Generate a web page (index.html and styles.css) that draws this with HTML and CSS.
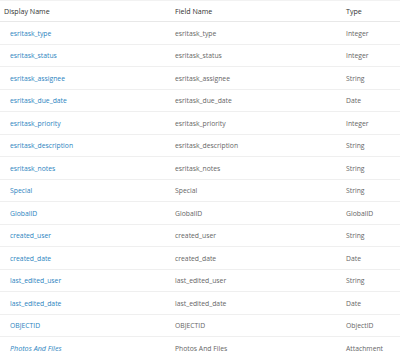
FILE: index.html
```html
<!DOCTYPE html>
<html>
<head>
<meta charset="utf-8">
<link rel="stylesheet" href="styles.css">
</head>
<body>
<div class="table">
  <div class="row head">
    <div class="c1">Display Name</div><div class="c2">Field Name</div><div class="c3">Type</div>
  </div>
  <div class="row"><div class="c1 link">esritask_type</div><div class="c2">esritask_type</div><div class="c3">Integer</div></div>
  <div class="row"><div class="c1 link">esritask_status</div><div class="c2">esritask_status</div><div class="c3">Integer</div></div>
  <div class="row"><div class="c1 link">esritask_assignee</div><div class="c2">esritask_assignee</div><div class="c3">String</div></div>
  <div class="row"><div class="c1 link">esritask_due_date</div><div class="c2">esritask_due_date</div><div class="c3">Date</div></div>
  <div class="row"><div class="c1 link">esritask_priority</div><div class="c2">esritask_priority</div><div class="c3">Integer</div></div>
  <div class="row"><div class="c1 link">esritask_description</div><div class="c2">esritask_description</div><div class="c3">String</div></div>
  <div class="row"><div class="c1 link">esritask_notes</div><div class="c2">esritask_notes</div><div class="c3">String</div></div>
  <div class="row"><div class="c1 link">Special</div><div class="c2">Special</div><div class="c3">String</div></div>
  <div class="row"><div class="c1 link">GlobalID</div><div class="c2">GlobalID</div><div class="c3">GlobalID</div></div>
  <div class="row"><div class="c1 link">created_user</div><div class="c2">created_user</div><div class="c3">String</div></div>
  <div class="row"><div class="c1 link">created_date</div><div class="c2">created_date</div><div class="c3">Date</div></div>
  <div class="row"><div class="c1 link">last_edited_user</div><div class="c2">last_edited_user</div><div class="c3">String</div></div>
  <div class="row"><div class="c1 link">last_edited_date</div><div class="c2">last_edited_date</div><div class="c3">Date</div></div>
  <div class="row"><div class="c1 link">OBJECTID</div><div class="c2">OBJECTID</div><div class="c3">ObjectID</div></div>
  <div class="row"><div class="c1 link italic">Photos And Files</div><div class="c2">Photos And Files</div><div class="c3">Attachment</div></div>
</div>
</body>
</html>
```
FILE: styles.css
```css
html, body {
  margin: 0;
  padding: 0;
  background: #ffffff;
}
body {
  font-family: "Open Sans", "Noto Sans", sans-serif;
  width: 400px;
  height: 356px;
  overflow: hidden;
}
.table {
  display: flex;
  flex-direction: column;
  border-top: 1px solid #f2f2f2;
}
.row {
  display: grid;
  grid-template-columns: 175px 171px 54px;
  align-items: center;
  height: 23px;
  border-bottom: 1px solid #efefef;
  box-sizing: border-box;
  font-size: 6.8px;
  color: #666666;
  white-space: nowrap;
}
.row:nth-child(odd) {
  height: 22px;
}
.row.head {
  height: 21px;
  font-size: 7.1px;
  color: #323232;
  font-weight: 500;
  border-bottom-color: #e8e8e8;
}
.c1 { padding-left: 10px; }
.head .c1 { padding-left: 4px; }
.link { color: #2b84c0; }
.italic { font-style: italic; font-size: 7.2px; }
```
